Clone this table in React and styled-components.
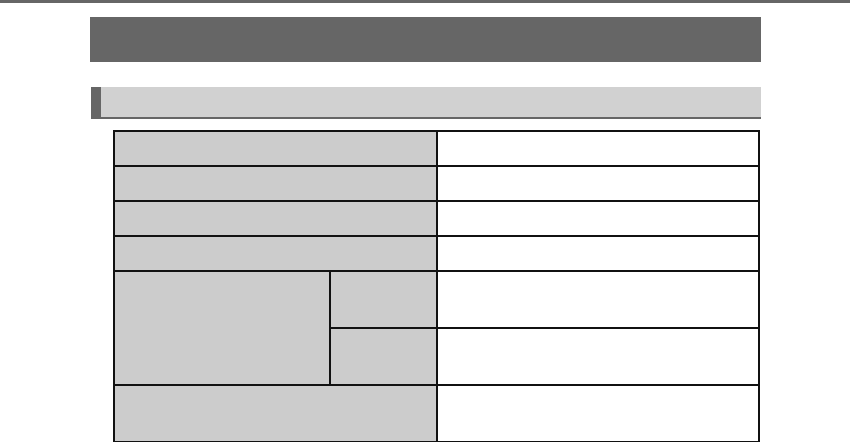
import React from "react";
import styled, { createGlobalStyle } from "styled-components";

const GlobalStyle = createGlobalStyle`
  html, body {
    margin: 0;
    padding: 0;
    background: #fff;
    font-family: "Liberation Sans", Arial, sans-serif;
  }
`;

const TopRule = styled.div`
  height: 3px;
  background: #666;
`;

const Page = styled.div`
  width: 671px;
  margin-left: 90px;
  padding-top: 14px;
`;

const TitleBar = styled.div`
  height: 45px;
  background: #666;
`;

const SectionHeader = styled.div`
  margin-top: 25px;
  margin-left: 1px;
  height: 30px;
  background: #d1d1d1;
  border-left: 10px solid #666;
  border-bottom: 2px solid #666;
`;

// spec table: 4 short rows, then two tall rows sharing a label, then one tall row
const SpecGrid = styled.div`
  margin-top: 11px;
  margin-left: 23px;
  width: 643px;
  display: grid;
  grid-template-columns: 214px 105px 320px;
  grid-template-rows: repeat(4, 33px) repeat(3, 55px);
  gap: 2px;
  padding: 2px;
  background: #111;
`;

const Cell = styled.div`
  background: ${(p) => (p.$head ? "#ccc" : "#fff")};
  grid-column: ${(p) => p.$col};
  grid-row: ${(p) => p.$row};
`;

const cells = [
  { head: true, col: "1 / 3", row: "1" },
  { col: "3", row: "1" },
  { head: true, col: "1 / 3", row: "2" },
  { col: "3", row: "2" },
  { head: true, col: "1 / 3", row: "3" },
  { col: "3", row: "3" },
  { head: true, col: "1 / 3", row: "4" },
  { col: "3", row: "4" },
  { head: true, col: "1", row: "5 / 7" },
  { head: true, col: "2", row: "5" },
  { col: "3", row: "5" },
  { head: true, col: "2", row: "6" },
  { col: "3", row: "6" },
  { head: true, col: "1 / 3", row: "7" },
  { col: "3", row: "7" },
];

const App = () => {
  return (
    <>
      <GlobalStyle />
      <TopRule />
      <Page>
        <TitleBar />
        <SectionHeader />
        <SpecGrid>
          {cells.map((c, i) => (
            <Cell key={i} $head={c.head} $col={c.col} $row={c.row} />
          ))}
        </SpecGrid>
      </Page>
    </>
  );
};

export default App;
